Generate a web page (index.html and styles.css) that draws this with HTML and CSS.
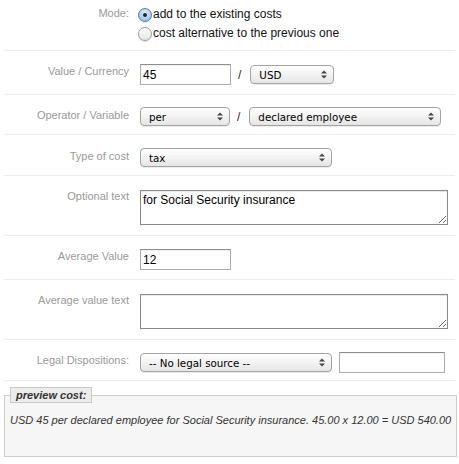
FILE: index.html
```html
<!DOCTYPE html>
<html>
<head>
<meta charset="utf-8">
<title>Cost</title>
<link rel="stylesheet" href="styles.css">
</head>
<body>
<div class="form">
  <div class="row row-mode">
    <div class="label">Mode:</div>
    <div class="field radios">
      <label class="radio"><span class="dot on"></span>add to the existing costs</label>
      <label class="radio"><span class="dot"></span>cost alternative to the previous one</label>
    </div>
  </div>

  <div class="row">
    <div class="label">Value / Currency</div>
    <div class="field">
      <input class="text w90" type="text" value="45">
      <span class="slash">/</span>
      <div class="select w83"><span>USD</span><svg class="arrows" width="6" height="9" viewBox="0 0 6 9"><polygon points="0,3.5 3,0.5 6,3.5"/><polygon points="0,5.5 3,8.5 6,5.5"/></svg></div>
    </div>
  </div>

  <div class="row">
    <div class="label">Operator / Variable</div>
    <div class="field">
      <div class="select w89"><span>per</span><svg class="arrows" width="6" height="9" viewBox="0 0 6 9"><polygon points="0,3.5 3,0.5 6,3.5"/><polygon points="0,5.5 3,8.5 6,5.5"/></svg></div>
      <span class="slash">/</span>
      <div class="select w191"><span>declared employee</span><svg class="arrows" width="6" height="9" viewBox="0 0 6 9"><polygon points="0,3.5 3,0.5 6,3.5"/><polygon points="0,5.5 3,8.5 6,5.5"/></svg></div>
    </div>
  </div>

  <div class="row row-sel">
    <div class="label">Type of cost</div>
    <div class="field">
      <div class="select w191"><span>tax</span><svg class="arrows" width="6" height="9" viewBox="0 0 6 9"><polygon points="0,3.5 3,0.5 6,3.5"/><polygon points="0,5.5 3,8.5 6,5.5"/></svg></div>
    </div>
  </div>

  <div class="row">
    <div class="label">Optional text</div>
    <div class="field">
      <textarea class="area">for Social Security insurance</textarea>
    </div>
  </div>

  <div class="row">
    <div class="label">Average Value</div>
    <div class="field">
      <input class="text w90" type="text" value="12">
    </div>
  </div>

  <div class="row">
    <div class="label">Average value text</div>
    <div class="field">
      <textarea class="area"></textarea>
    </div>
  </div>

  <div class="row row-legal">
    <div class="label">Legal Dispositions:</div>
    <div class="field">
      <div class="select w191 legal"><span>-- No legal source --</span><svg class="arrows" width="6" height="9" viewBox="0 0 6 9"><polygon points="0,3.5 3,0.5 6,3.5"/><polygon points="0,5.5 3,8.5 6,5.5"/></svg></div>
      <input class="text w105 flat" type="text" value="">
    </div>
  </div>
</div>

<fieldset class="preview">
  <legend>preview cost:</legend>
  <p>USD 45 per declared employee for Social Security insurance. 45.00 x 12.00 = USD 540.00</p>
</fieldset>
</body>
</html>
```

FILE: styles.css
```css
* { box-sizing: border-box; }

body {
  margin: 0;
  font-family: "Liberation Sans", Arial, sans-serif;
  font-size: 12px;
  color: #000;
  background: #fff;
}

.form {
  margin-left: 4px;
  width: 451px;
}

.row {
  display: grid;
  grid-template-columns: 125px 1fr;
  column-gap: 11px;
  padding: 12px 0 8px;
  border-bottom: 1px solid #ececec;
}

.row-mode { padding: 5px 0 7px; }
.row-sel { padding: 13px 0 8px; }
.row-legal { padding: 12px 0 7px; }

.label {
  text-align: right;
  color: #999;
  font-size: 11px;
  line-height: 13px;
  padding-top: 2px;
}

.field {
  display: flex;
  align-items: center;
}

.radios {
  flex-direction: column;
  align-items: flex-start;
}

.radio {
  display: flex;
  align-items: center;
  height: 19px;
  line-height: 19px;
  font-size: 12px;
  color: #111;
}

.dot {
  width: 14px;
  height: 14px;
  margin-left: -2px;
  margin-right: 1px;
  border-radius: 50%;
  border: 1px solid #9b9b9b;
  background: linear-gradient(#ffffff, #e6e6e6);
  box-shadow: 0 1px 1px rgba(0,0,0,.12);
  display: flex;
  align-items: center;
  justify-content: center;
}

.dot.on {
  border-color: #5d7ea6;
  background: radial-gradient(circle at 50% 35%, #e6f1fc 0, #a9cbee 60%, #7fa9d8 100%);
}

.dot.on::after {
  content: "";
  width: 4px;
  height: 4px;
  border-radius: 50%;
  background: #1c2837;
}

.text {
  height: 21px;
  margin: 1px 0;
  border: 1px solid #ababab;
  border-top-color: #8e8e8e;
  padding: 0 2px;
  font-family: "Liberation Sans", Arial, sans-serif;
  font-size: 12px;
  color: #000;
  background: #fff;
  box-shadow: inset 0 1px 1px rgba(0,0,0,.07);
  outline: none;
}

.w90 { width: 91px; }
.w105 { width: 106px; }
.flat { margin: 0; }

.slash {
  padding: 0 9px 0 7px;
  font-size: 12px;
  color: #222;
}

.select {
  height: 19px;
  border: 1px solid #a3a3a3;
  border-radius: 4px;
  background: linear-gradient(#ffffff, #f3f3f3 50%, #e5e5e5);
  box-shadow: 0 1px 1px rgba(0,0,0,.08);
  display: flex;
  align-items: center;
  justify-content: space-between;
  padding: 0 6px 0 8px;
  font-family: "DejaVu Sans", "Lucida Grande", sans-serif;
  font-size: 10.3px;
  color: #000;
}

.arrows { fill: #444; }

.w83 { width: 84px; }
.w89 { width: 90px; }
.w191 { width: 192px; }
.legal { margin-right: 7px; }

.area {
  width: 308px;
  height: 35px;
  margin: 2px 0;
  border: 1px solid #8a8a8a;
  padding: 2px 2px;
  font-family: "Liberation Sans", Arial, sans-serif;
  font-size: 12px;
  line-height: 14px;
  color: #000;
  background: #fff;
  box-shadow: inset 0 1px 1px rgba(0,0,0,.1);
  outline: none;
}

.preview {
  margin: 6px 0 0 4px;
  width: 451px;
  padding: 0 5px;
  border: 1px solid #cdcdcd;
  background: #f6f6f6;
}

.preview legend {
  padding: 0 5px;
  border: 1px solid #c9c9c9;
  background: #ececec;
  font-size: 11px;
  line-height: 14px;
  font-weight: bold;
  font-style: italic;
  color: #333;
}

.preview p {
  margin: 10px 0 29px;
  font-size: 11px;
  line-height: 14px;
  font-style: italic;
  color: #333;
  white-space: nowrap;
}
```
